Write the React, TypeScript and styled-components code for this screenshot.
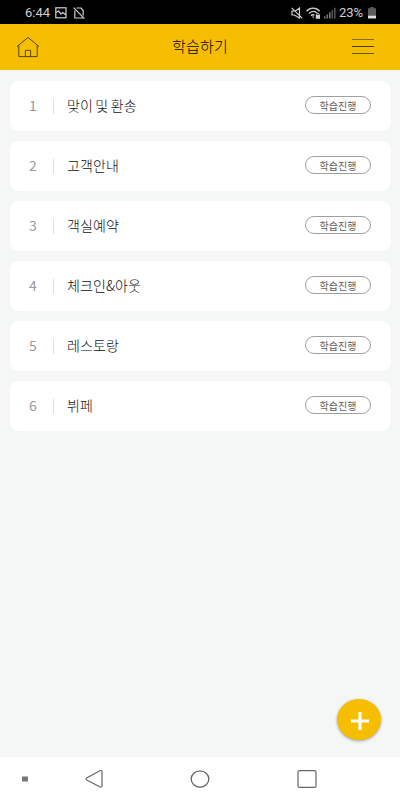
import React from 'react';
import styled, { createGlobalStyle } from 'styled-components';

const GlobalStyle = createGlobalStyle`
  * { box-sizing: border-box; }
  body { margin: 0; background: #f5f7f7; }
`;

const Screen = styled.div`
  position: relative;
  display: flex;
  flex-direction: column;
  width: 400px;
  height: 800px;
  overflow: hidden;
  background: #f5f7f7;
  font-family: 'Noto Sans CJK KR', sans-serif;
`;

const StatusBar = styled.div`
  display: flex;
  flex: none;
  align-items: center;
  justify-content: space-between;
  height: 24px;
  padding: 1px 24px 0 25px;
  background: #000;
  color: #d0d0d0;
  font: 400 13px/24px Roboto, sans-serif;
`;

const StatusGroup = styled.div<{ $gap: number }>`
  display: flex;
  align-items: center;
  gap: ${(p) => p.$gap}px;
`;

const Clock = styled.span`
  width: 24px;
  white-space: nowrap;
`;

const Percent = styled.span`
  width: 25px;
  margin-right: 1px;
  white-space: nowrap;
  letter-spacing: -0.1px;
`;

const Header = styled.header`
  display: grid;
  grid-template-columns: 26px 1fr 26px;
  align-items: center;
  flex: none;
  height: 46px;
  padding: 0 24px 0 15px;
  background: #f5be00;
`;

const Title = styled.h1`
  margin: 0 0 2px 9px;
  text-align: center;
  font-size: 15px;
  font-weight: 300;
  line-height: 22px;
  letter-spacing: 0.15px;
  color: #000;
`;

const IconButton = styled.button`
  display: flex;
  justify-content: center;
  padding: 0;
  border: 0;
  background: none;
`;

const List = styled.ul`
  flex: 1;
  display: flex;
  flex-direction: column;
  gap: 10px;
  margin: 0;
  padding: 11px 9px 0 10px;
  list-style: none;
`;

const Row = styled.li`
  display: flex;
  align-items: center;
  height: 50px;
  padding: 0 20px 1px 18px;
  border-radius: 9px;
  background: #fff;
`;

const Index = styled.span`
  width: 25px;
  padding-left: 1px;
  margin-bottom: 1px;
  font-size: 14px;
  font-weight: 400;
  line-height: 20px;
  color: #999;
`;

const Divider = styled.span`
  width: 1px;
  height: 15px;
  margin: 1px 13px 0 0;
  background: #dedede;
`;

const Label = styled.span`
  flex: 1;
  margin-bottom: 1px;
  font-size: 14px;
  font-weight: 300;
  line-height: 20px;
  letter-spacing: 0.1px;
  word-spacing: -0.8px;
  color: #111;
`;

const StudyButton = styled.button`
  width: 66px;
  height: 18px;
  margin-bottom: 1px;
  padding: 1px 0 0;
  border: 1px solid #a0a0a0;
  border-radius: 9px;
  background: #fff;
  color: #606060;
  font-family: inherit;
  font-size: 10px;
  font-weight: 400;
  line-height: 15px;
`;

const AddButton = styled.button`
  position: absolute;
  left: 337px;
  top: 699px;
  display: flex;
  align-items: center;
  justify-content: center;
  width: 44px;
  height: 41px;
  padding: 2px 0 0 2px;
  border: 0;
  border-radius: 50%;
  background: #f5be00;
  box-shadow: 0 1px 3px rgba(0, 0, 0, 0.35);
`;

const NavBar = styled.nav`
  display: grid;
  grid-template-columns: 50px 87px 126px 87px 50px;
  align-items: center;
  justify-items: center;
  flex: none;
  height: 43px;
  background: #fff;
`;

const rows = ['맞이 및 환송', '고객안내', '객실예약', '체크인&아웃', '레스토랑', '뷔페'];

const PictureIcon = () => (
  <svg width="12" height="12" viewBox="0 0 12 12" fill="none" stroke="#d0d0d0" strokeWidth="1.2">
    <rect x=".8" y=".8" width="10.2" height="10" />
    <path d="M1 5.5 3.5 4 6 7 8 5.5 11 8" />
  </svg>
);

const NoSimIcon = () => (
  <svg width="12" height="12" viewBox="0 0 12 12" fill="none" stroke="#d0d0d0" strokeWidth="1.2">
    <path d="M3.5 1H8l2.2 2.5v5M1.8 3.4V11h8.4M.6.6 11.4 11.6" />
  </svg>
);

const MuteIcon = () => (
  <svg width="12" height="12" viewBox="0 0 12 12" fill="none" stroke="#d0d0d0" strokeWidth="1.2">
    <path d="M1 4v4h2.3L8.5 11V1L4.5 4zM.7.8l10.6 10.6" />
  </svg>
);

const WifiIcon = () => (
  <svg width="15" height="12" viewBox="0 0 15 12" fill="none" stroke="#d0d0d0" strokeWidth="1.3">
    <path d="M.6 4.2C4.1.2 10.1.2 13.6 4.2M2.8 6.6c2.5-2.7 5.8-2.7 8.3-.6M5 8.8C6 7.7 7.5 7.6 8.5 8.3" />
    <path d="M5.8 9.4h2v2.2z" fill="#d0d0d0" stroke="none" />
    <path d="M9.8 8h4.2v3.8H9.8z" fill="#d0d0d0" stroke="none" />
    <path d="M10.7 8V6.9q1.2-1.3 2.4 0V8" strokeWidth=".9" />
  </svg>
);

const SignalIcon = () => (
  <svg width="12" height="12" viewBox="0 0 12 12">
    <path d="M0 9.5h1.6V11.5H0zM2.5 7.5h1.6v4H2.5zM5 5.2h1.6v6.3H5z" fill="#777" />
    <path d="M7.5 3h1.6v8.5H7.5zM10 .8h1.6v10.7H10z" fill="#505050" />
  </svg>
);

const BatteryIcon = () => (
  <svg width="8" height="12" viewBox="0 0 8 12">
    <path d="M2.4 0h3.2v1.3H8V9H0V1.3h2.4z" fill="#5c5c5c" />
    <path d="M0 8.7h8v2.8H0z" fill="#ddd" />
  </svg>
);

const HomeIcon = () => (
  <svg width="26" height="24" viewBox="0 0 26 24" fill="none" stroke="#4c3e08" strokeWidth=".95">
    <path d="M2 11.6 13 2.4l11 9.2M3.8 10.4v11.2h18.4V10.4M10.4 21.6v-6.3h5.2v6.3" />
  </svg>
);

const MenuIcon = () => (
  <svg width="22" height="18" viewBox="0 0 22 18" strokeWidth="1">
    <path d="M0 1.5h22" stroke="#8a6c04" />
    <path d="M0 8.5h22" stroke="#4c3e08" />
    <path d="M0 15.5h22" stroke="#6a5406" />
  </svg>
);

const PlusIcon = () => (
  <svg width="18" height="18" viewBox="0 0 18 18" stroke="#fff" strokeWidth="3.2">
    <path d="M9 0v18M0 9h18" />
  </svg>
);

const RecentDot = () => (
  <svg width="6" height="6" viewBox="0 0 6 6">
    <path d="M0 .5h6v5H0z" fill="#777" />
  </svg>
);

const BackIcon = () => (
  <svg width="18" height="20" viewBox="0 0 18 20" fill="none" stroke="#666" strokeWidth="1.2">
    <path d="M1.7 9 14.7 1.8q2.3-.9 2.3 1v14q0 1.9-2.3 1L1.7 11q-1.4-1 0-2z" />
  </svg>
);

const HomeCircle = () => (
  <svg width="20" height="18" viewBox="0 0 20 18" fill="none" stroke="#666" strokeWidth="1.3">
    <ellipse cx="10" cy="9" rx="8.8" ry="8.2" />
  </svg>
);

const SquareIcon = () => (
  <svg width="20" height="18" viewBox="0 0 20 18" fill="none" stroke="#666" strokeWidth="1.2">
    <rect x="1" y=".7" width="18" height="16.6" rx="1.6" />
  </svg>
);

export default function App() {
  return (
    <Screen>
      <GlobalStyle />
      <StatusBar>
        <StatusGroup $gap={6}>
          <Clock>6:44</Clock>
          <PictureIcon />
          <NoSimIcon />
        </StatusGroup>
        <StatusGroup $gap={3}>
          <MuteIcon />
          <WifiIcon />
          <SignalIcon />
          <Percent>23%</Percent>
          <BatteryIcon />
        </StatusGroup>
      </StatusBar>
      <Header>
        <IconButton aria-label="홈"><HomeIcon /></IconButton>
        <Title>학습하기</Title>
        <IconButton aria-label="메뉴"><MenuIcon /></IconButton>
      </Header>
      <List>
        {rows.map((name, i) => (
          <Row key={name}>
            <Index>{i + 1}</Index>
            <Divider />
            <Label>{name}</Label>
            <StudyButton>학습진행</StudyButton>
          </Row>
        ))}
      </List>
      <AddButton aria-label="추가"><PlusIcon /></AddButton>
      <NavBar>
        <RecentDot />
        <BackIcon />
        <HomeCircle />
        <SquareIcon />
      </NavBar>
    </Screen>
  );
}
